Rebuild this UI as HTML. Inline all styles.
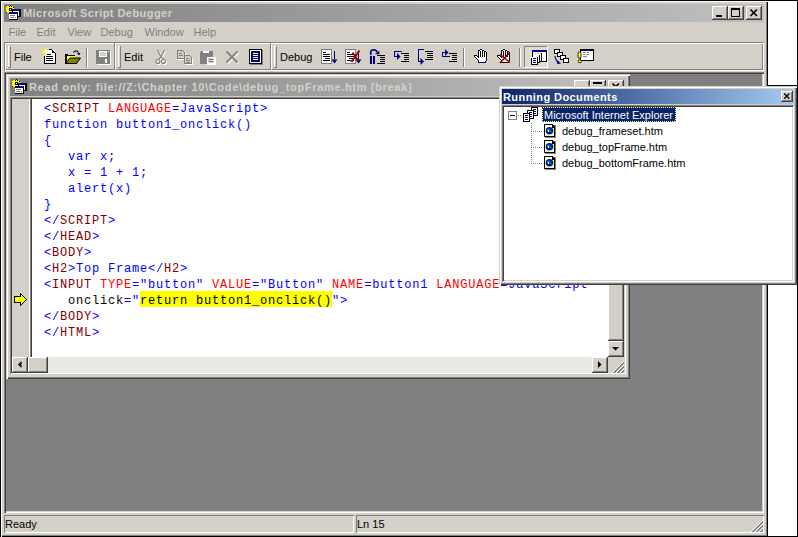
<!DOCTYPE html>
<html><head><meta charset="utf-8">
<style>
*{margin:0;padding:0;box-sizing:border-box}
html,body{width:798px;height:537px;overflow:hidden;background:#fff;font-family:"Liberation Sans",sans-serif;font-size:11px;line-height:13px}
div,svg{position:absolute}
svg{shape-rendering:crispEdges;overflow:visible}
.ln{background:#000}
.tt{font-weight:bold;color:#d4d0c8;white-space:nowrap;letter-spacing:0.35px}
.raised{background:#d4d0c8;box-shadow:inset -1px -1px #404040,inset 1px 1px #fff,inset -2px -2px #808080}
.sunk{box-shadow:inset 1px 1px #808080,inset -1px -1px #fff,inset 2px 2px #404040,inset -2px -2px #d4d0c8}
.thin{box-shadow:inset 1px 1px #808080,inset -1px -1px #fff}
.mn{top:26px;color:#808080;white-space:nowrap}
.lbl{top:51px;color:#000;white-space:nowrap}
.sep{top:48px;width:2px;height:19px;box-shadow:inset 1px 0 #808080,inset -1px 0 #fff}
.div{top:42px;width:2px;height:29px;box-shadow:inset 1px 0 #808080,inset -1px 0 #fff}
.grip{top:46px;width:3px;height:22px;box-shadow:inset 1px 1px #fff,inset -1px -1px #808080}
.code{left:44px;top:101px;font-family:"Liberation Mono",monospace;font-size:12px;letter-spacing:0.8px;white-space:pre;line-height:16px;color:#0000ff}
.m{color:#800000}.r{color:#ff0000}.k{color:#000}
.tree{color:#000;white-space:nowrap}
</style></head><body>

<!-- ===== main window frame ===== -->
<div style="left:0;top:0;width:768px;height:537px;background:#d4d0c8;box-shadow:inset 1px 1px #000,inset 2px 2px #fff,inset -1px -1px #000,inset -2px -2px #808080"></div>
<!-- right white strip borders -->
<div class="ln" style="left:767px;top:0;width:31px;height:1px"></div>
<div class="ln" style="left:797px;top:0;width:1px;height:537px"></div>
<div class="ln" style="left:767px;top:536px;width:31px;height:1px"></div>
<div class="ln" style="left:767px;top:85px;width:31px;height:1px"></div>

<!-- ===== title bar ===== -->
<div style="left:4px;top:4px;width:760px;height:18px;background:linear-gradient(to right,#808080,#c0c0c0)"></div>
<svg style="left:6px;top:5px" width="16" height="16" viewBox="0 0 16 16">
 <g fill="#ffff00"><rect x="1" y="1" width="6" height="7"/><rect x="0" y="2" width="8" height="5"/></g>
 <g fill="#000"><rect x="4" y="0" width="1" height="1"/><rect x="3" y="1" width="1" height="1"/><rect x="5" y="1" width="1" height="1"/><rect x="7" y="2" width="1" height="1"/><rect x="0" y="7" width="1" height="1"/><rect x="3" y="3" width="3" height="3"/></g>
 <rect x="4" y="4" width="1" height="1" fill="#fff"/>
 <rect x="6" y="4" width="9" height="8" fill="#000"/><rect x="6" y="4" width="8" height="2" fill="#000080"/><rect x="7" y="6" width="6" height="5" fill="#fff"/>
 <rect x="3" y="7" width="9" height="8" fill="#000"/><rect x="3" y="7" width="8" height="2" fill="#000080"/><rect x="3" y="9" width="8" height="5" fill="#fff"/>
 <g fill="#808080"><rect x="4" y="10" width="5" height="1"/><rect x="4" y="12" width="4" height="1"/><rect x="9" y="12" width="1" height="1"/></g>
</svg>
<div class="tt" style="left:23px;top:7px;letter-spacing:0.45px">Microsoft Script Debugger</div>
<div class="raised" style="left:712px;top:6px;width:16px;height:14px"></div>
<div class="ln" style="left:716px;top:15px;width:6px;height:2px"></div>
<div class="raised" style="left:728px;top:6px;width:16px;height:14px"></div>
<div style="left:731px;top:8px;width:9px;height:9px;border:1px solid #000;border-top-width:2px"></div>
<div class="raised" style="left:746px;top:6px;width:16px;height:14px"></div>
<svg style="left:746px;top:6px" width="16" height="14" viewBox="0 0 16 14"><path d="M4.5 3.5 L11 10 M11 3.5 L4.5 10" stroke="#000" stroke-width="1.6" shape-rendering="geometricPrecision"/></svg>

<!-- ===== menu ===== -->
<div class="mn" style="left:8.5px">File</div>
<div class="mn" style="left:36.5px">Edit</div>
<div class="mn" style="left:67.5px">View</div>
<div class="mn" style="left:100.5px">Debug</div>
<div class="mn" style="left:144.5px">Window</div>
<div class="mn" style="left:193.5px">Help</div>

<!-- ===== toolbar band ===== -->
<div id="band" style="left:4px;top:42px;width:760px;height:29px;box-shadow:inset 1px 1px #808080,inset 2px 2px #fff,inset -1px -1px #fff,inset -2px -2px #808080"></div>
<div id="tools"></div>
<svg style="left:0;top:0" width="798" height="80" viewBox="0 0 798 80">
<!-- grippers & dividers -->
<g fill="#fff"><rect x="8" y="46" width="1" height="22"/><rect x="8" y="46" width="3" height="1"/>
<rect x="118" y="46" width="1" height="22"/><rect x="118" y="46" width="3" height="1"/>
<rect x="274" y="46" width="1" height="22"/><rect x="274" y="46" width="3" height="1"/>
<rect x="115" y="43" width="1" height="28"/><rect x="271" y="43" width="1" height="28"/>
<rect x="87" y="48" width="1" height="19"/><rect x="464" y="48" width="1" height="19"/><rect x="520" y="48" width="1" height="19"/></g>
<g fill="#808080"><rect x="10" y="46" width="1" height="22"/><rect x="8" y="67" width="3" height="1"/>
<rect x="120" y="46" width="1" height="22"/><rect x="118" y="67" width="3" height="1"/>
<rect x="276" y="46" width="1" height="22"/><rect x="274" y="67" width="3" height="1"/>
<rect x="114" y="42" width="1" height="28"/><rect x="270" y="42" width="1" height="28"/>
<rect x="86" y="48" width="1" height="19"/><rect x="463" y="48" width="1" height="19"/><rect x="519" y="48" width="1" height="19"/></g>

<!-- NEW -->
<rect x="45" y="50" width="10" height="13" fill="#fff"/>
<g fill="#000"><rect x="44" y="54" width="1" height="10"/><rect x="44" y="63" width="12" height="1"/><rect x="55" y="53" width="1" height="11"/>
<rect x="49" y="49" width="3" height="1"/><rect x="52" y="50" width="1" height="1"/><rect x="53" y="51" width="1" height="1"/><rect x="54" y="52" width="1" height="1"/>
<rect x="52" y="51" width="1" height="2"/><rect x="53" y="52" width="1" height="1"/>
<rect x="46" y="56" width="7" height="1"/><rect x="46" y="58" width="7" height="1"/><rect x="46" y="60" width="7" height="1"/><rect x="47" y="54" width="4" height="1"/></g>
<g fill="#ffff00"><rect x="41" y="49" width="1" height="1"/><rect x="42" y="50" width="1" height="1"/><rect x="43" y="51" width="2" height="2"/><rect x="41" y="52" width="2" height="1"/><rect x="46" y="51" width="1" height="1"/><rect x="47" y="50" width="1" height="1"/><rect x="45" y="53" width="1" height="1"/><rect x="44" y="54" width="1" height="2"/><rect x="45" y="48" width="1" height="2"/></g>

<!-- OPEN -->
<path d="M65 54 H68 V55 H75 V58 H67 V63 H65 Z" fill="#000"/>
<rect x="67" y="56" width="8" height="7" fill="#ffff00"/>
<g fill="#fff"><rect x="68" y="57" width="1" height="1"/><rect x="70" y="57" width="1" height="1"/><rect x="72" y="57" width="1" height="1"/><rect x="69" y="59" width="1" height="1"/><rect x="68" y="61" width="1" height="1"/></g>
<path d="M70 58 H80.5 L76.5 63.5 H65.5 Z" fill="#808000" stroke="#000" stroke-width="1" shape-rendering="geometricPrecision"/>
<rect x="65" y="63" width="12" height="1" fill="#000"/>
<path d="M73.5 52.5 Q76 49 78.5 52.5" fill="none" stroke="#000" stroke-width="1.2" shape-rendering="geometricPrecision"/>
<path d="M77 53 H80.5 L79 55.5 Z" fill="#000" shape-rendering="geometricPrecision"/>

<!-- SAVE disabled -->
<rect x="97" y="51" width="14" height="14" fill="#fff"/>
<rect x="96" y="50" width="14" height="14" fill="#808080"/>
<rect x="99" y="51" width="8" height="6" fill="#fff"/><rect x="100" y="52" width="6" height="4" fill="#d4d0c8"/>
<rect x="105" y="59" width="2" height="4" fill="#fff"/><rect x="108" y="51" width="1" height="1" fill="#fff"/>

<!-- CUT disabled -->
<g shape-rendering="geometricPrecision" fill="none" stroke-width="1.1">
<g stroke="#fff" transform="translate(1,1)"><path d="M157.5 50 L161 57 M164.5 50 L161 57 M161 57 L158.5 59 M161 57 L163.5 59"/><circle cx="158" cy="61.5" r="2"/><circle cx="163.5" cy="61.5" r="2"/></g>
<g stroke="#808080"><path d="M157.5 50 L161 57 M164.5 50 L161 57 M161 57 L158.5 59 M161 57 L163.5 59"/><circle cx="158" cy="61.5" r="2"/><circle cx="163.5" cy="61.5" r="2"/></g>
</g>

<!-- COPY disabled -->
<g fill="none" stroke="#fff" stroke-width="1" transform="translate(1,1)">
<path d="M177.5 50.5 H182.5 L184.5 52.5 V58.5 H177.5 Z"/><path d="M184.5 55.5 H189.5 L191.5 57.5 V63.5 H184.5 Z"/>
</g>
<g fill="#d4d0c8" stroke="#808080" stroke-width="1">
<path d="M177.5 50.5 H182.5 L184.5 52.5 V58.5 H177.5 Z"/><path d="M184.5 55.5 H189.5 L191.5 57.5 V63.5 H184.5 Z"/>
</g>
<g fill="#808080"><rect x="179" y="53" width="3" height="1"/><rect x="179" y="55" width="4" height="1"/><rect x="186" y="58" width="3" height="1"/><rect x="186" y="60" width="4" height="1"/><rect x="186" y="62" width="4" height="1"/></g>
<!-- PASTE disabled -->
<rect x="200" y="51" width="13" height="13" rx="2" fill="#808080"/>
<rect x="203" y="51" width="6" height="2" fill="#fff"/>
<rect x="207" y="57" width="9" height="8" fill="#fff"/><rect x="208" y="58" width="6" height="5" fill="#d4d0c8"/>
<rect x="209" y="59" width="4" height="1" fill="#808080"/><rect x="209" y="61" width="4" height="1" fill="#808080"/>

<!-- DELETE disabled -->
<g shape-rendering="geometricPrecision" stroke-width="1.8">
<path d="M226.5 51.5 L237.5 62.5 M237.5 51.5 L226.5 62.5" stroke="#fff" transform="translate(1,1)"/>
<path d="M226.5 51.5 L237.5 62.5 M237.5 51.5 L226.5 62.5" stroke="#808080"/>
</g>

<!-- PROPERTIES -->
<rect x="250" y="50" width="13" height="15" fill="#808080"/>
<rect x="249" y="49" width="13" height="15" fill="#000"/>
<rect x="250" y="50" width="11" height="13" fill="#fff"/>
<rect x="251" y="51" width="9" height="11" fill="#000080"/>
<g fill="#fff"><rect x="253" y="53" width="5" height="1"/><rect x="253" y="55" width="5" height="1"/><rect x="253" y="57" width="5" height="1"/><rect x="253" y="59" width="5" height="1"/></g>

<!-- RUN -->
<rect x="321" y="49" width="11" height="15" fill="#808080"/><rect x="322" y="50" width="9" height="13" fill="#fff"/>
<g fill="#000"><rect x="323" y="52" width="3" height="1"/><rect x="323" y="54" width="7" height="1"/><rect x="323" y="56" width="7" height="1"/><rect x="325" y="58" width="5" height="1"/><rect x="323" y="60" width="7" height="1"/></g>
<rect x="334" y="51" width="1" height="10" fill="#000080"/>
<path d="M331.5 59.5 H337.5 L334.5 63.5 Z" fill="#000080" shape-rendering="geometricPrecision"/>

<!-- STOP -->
<rect x="345" y="49" width="11" height="15" fill="#808080"/><rect x="346" y="50" width="9" height="13" fill="#fff"/>
<g fill="#000"><rect x="347" y="52" width="3" height="1"/><rect x="347" y="54" width="7" height="1"/><rect x="347" y="56" width="7" height="1"/><rect x="349" y="58" width="5" height="1"/><rect x="347" y="60" width="7" height="1"/></g>
<rect x="358" y="53" width="1" height="8" fill="#000080"/>
<path d="M355.5 59.5 H361.5 L358.5 63.5 Z" fill="#000080" shape-rendering="geometricPrecision"/>
<path d="M351.5 62 L359.5 50.5 M352.5 52.5 L358.5 61" stroke="#9b0000" stroke-width="1.8" shape-rendering="geometricPrecision"/>

<!-- BREAK -->
<g fill="#000080"><rect x="370" y="56" width="2" height="8"/><rect x="373" y="56" width="2" height="8"/></g>
<path d="M371 55 Q369.5 50 373.5 49.8 Q376.5 50 377 52" fill="none" stroke="#000080" stroke-width="1.6" shape-rendering="geometricPrecision"/>
<path d="M375 53.8 L379.3 50.8 L379.3 54.5 Z" fill="#000080" shape-rendering="geometricPrecision"/>
<g fill="#000"><rect x="377" y="55" width="8" height="1"/><rect x="380" y="57" width="5" height="1"/><rect x="380" y="59" width="5" height="1"/><rect x="380" y="61" width="5" height="1"/><rect x="377" y="63" width="8" height="1"/></g>

<!-- STEP INTO -->
<g fill="#000080"><rect x="394" y="51" width="8" height="1"/><rect x="394" y="51" width="1" height="6"/><rect x="394" y="56" width="4" height="1"/></g>
<path d="M397 53 L400.5 56.5 L397 60 Z" fill="#000080" shape-rendering="geometricPrecision"/>
<g fill="#000"><rect x="401" y="53" width="8" height="1"/><rect x="404" y="55" width="5" height="1"/><rect x="404" y="57" width="5" height="1"/><rect x="404" y="59" width="5" height="1"/><rect x="401" y="61" width="8" height="1"/></g>

<!-- STEP OVER -->
<g fill="#000080"><rect x="418" y="49" width="6" height="1"/><rect x="418" y="49" width="1" height="13"/><rect x="418" y="61" width="3" height="1"/></g>
<path d="M420.5 58 L424 61.5 L420.5 65 Z" fill="#000080" shape-rendering="geometricPrecision"/>
<g fill="#000"><rect x="425" y="51" width="8" height="1"/><rect x="427" y="53" width="6" height="1"/><rect x="427" y="55" width="6" height="1"/><rect x="427" y="57" width="6" height="1"/><rect x="425" y="59" width="8" height="1"/></g>

<!-- STEP OUT -->
<g fill="#000080"><rect x="442" y="52" width="1" height="5"/><rect x="442" y="56" width="8" height="1"/><rect x="442" y="52" width="4" height="1"/></g>
<path d="M445 49 L448.5 52.5 L445 56 Z" fill="#000080" shape-rendering="geometricPrecision"/>
<g fill="#000"><rect x="449" y="53" width="8" height="1"/><rect x="452" y="55" width="5" height="1"/><rect x="452" y="57" width="5" height="1"/><rect x="452" y="59" width="5" height="1"/><rect x="449" y="61" width="8" height="1"/></g>

<!-- HAND -->
<rect x="480" y="49" width="2" height="1" fill="#000"/><rect x="478" y="50" width="2" height="1" fill="#000"/><rect x="480" y="50" width="2" height="1" fill="#fff"/><rect x="482" y="50" width="2" height="1" fill="#000"/><rect x="478" y="51" width="1" height="1" fill="#000"/><rect x="479" y="51" width="1" height="1" fill="#fff"/><rect x="480" y="51" width="1" height="1" fill="#000"/><rect x="481" y="51" width="1" height="1" fill="#fff"/><rect x="482" y="51" width="1" height="1" fill="#000"/><rect x="483" y="51" width="1" height="1" fill="#fff"/><rect x="484" y="51" width="2" height="1" fill="#000"/><rect x="478" y="52" width="1" height="1" fill="#000"/><rect x="479" y="52" width="1" height="1" fill="#fff"/><rect x="480" y="52" width="1" height="1" fill="#000"/><rect x="481" y="52" width="1" height="1" fill="#fff"/><rect x="482" y="52" width="1" height="1" fill="#000"/><rect x="483" y="52" width="1" height="1" fill="#fff"/><rect x="484" y="52" width="1" height="1" fill="#000"/><rect x="485" y="52" width="1" height="1" fill="#fff"/><rect x="486" y="52" width="1" height="1" fill="#000"/><rect x="478" y="53" width="1" height="1" fill="#000"/><rect x="479" y="53" width="1" height="1" fill="#fff"/><rect x="480" y="53" width="1" height="1" fill="#000"/><rect x="481" y="53" width="1" height="1" fill="#fff"/><rect x="482" y="53" width="1" height="1" fill="#000"/><rect x="483" y="53" width="1" height="1" fill="#fff"/><rect x="484" y="53" width="1" height="1" fill="#000"/><rect x="485" y="53" width="1" height="1" fill="#fff"/><rect x="486" y="53" width="1" height="1" fill="#000"/><rect x="478" y="54" width="1" height="1" fill="#000"/><rect x="479" y="54" width="1" height="1" fill="#fff"/><rect x="480" y="54" width="1" height="1" fill="#000"/><rect x="481" y="54" width="1" height="1" fill="#fff"/><rect x="482" y="54" width="1" height="1" fill="#000"/><rect x="483" y="54" width="1" height="1" fill="#fff"/><rect x="484" y="54" width="1" height="1" fill="#000"/><rect x="485" y="54" width="1" height="1" fill="#fff"/><rect x="486" y="54" width="1" height="1" fill="#000"/><rect x="474" y="55" width="3" height="1" fill="#000"/><rect x="478" y="55" width="1" height="1" fill="#000"/><rect x="479" y="55" width="1" height="1" fill="#fff"/><rect x="480" y="55" width="1" height="1" fill="#000"/><rect x="481" y="55" width="1" height="1" fill="#fff"/><rect x="482" y="55" width="1" height="1" fill="#000"/><rect x="483" y="55" width="1" height="1" fill="#fff"/><rect x="484" y="55" width="1" height="1" fill="#000"/><rect x="485" y="55" width="1" height="1" fill="#fff"/><rect x="486" y="55" width="1" height="1" fill="#000"/><rect x="474" y="56" width="1" height="1" fill="#000"/><rect x="475" y="56" width="2" height="1" fill="#fff"/><rect x="477" y="56" width="2" height="1" fill="#000"/><rect x="479" y="56" width="1" height="1" fill="#fff"/><rect x="480" y="56" width="1" height="1" fill="#000"/><rect x="481" y="56" width="1" height="1" fill="#fff"/><rect x="482" y="56" width="1" height="1" fill="#000"/><rect x="483" y="56" width="1" height="1" fill="#fff"/><rect x="484" y="56" width="1" height="1" fill="#000"/><rect x="485" y="56" width="1" height="1" fill="#fff"/><rect x="486" y="56" width="1" height="1" fill="#000"/><rect x="475" y="57" width="1" height="1" fill="#000"/><rect x="476" y="57" width="2" height="1" fill="#fff"/><rect x="478" y="57" width="1" height="1" fill="#000"/><rect x="479" y="57" width="7" height="1" fill="#fff"/><rect x="486" y="57" width="1" height="1" fill="#000"/><rect x="476" y="58" width="1" height="1" fill="#000"/><rect x="477" y="58" width="9" height="1" fill="#fff"/><rect x="486" y="58" width="1" height="1" fill="#000"/><rect x="477" y="59" width="1" height="1" fill="#000"/><rect x="478" y="59" width="8" height="1" fill="#fff"/><rect x="486" y="59" width="1" height="1" fill="#000"/><rect x="478" y="60" width="1" height="1" fill="#000"/><rect x="479" y="60" width="7" height="1" fill="#fff"/><rect x="486" y="60" width="1" height="1" fill="#000"/><rect x="478" y="61" width="1" height="1" fill="#000"/><rect x="479" y="61" width="6" height="1" fill="#fff"/><rect x="485" y="61" width="1" height="1" fill="#000"/><rect x="478" y="62" width="8" height="1" fill="#0000a0"/>
<!-- HAND X -->
<rect x="503" y="49" width="2" height="1" fill="#000"/><rect x="501" y="50" width="2" height="1" fill="#000"/><rect x="503" y="50" width="2" height="1" fill="#fff"/><rect x="505" y="50" width="2" height="1" fill="#000"/><rect x="501" y="51" width="1" height="1" fill="#000"/><rect x="502" y="51" width="1" height="1" fill="#fff"/><rect x="503" y="51" width="1" height="1" fill="#000"/><rect x="504" y="51" width="1" height="1" fill="#fff"/><rect x="505" y="51" width="1" height="1" fill="#000"/><rect x="506" y="51" width="1" height="1" fill="#fff"/><rect x="507" y="51" width="2" height="1" fill="#000"/><rect x="501" y="52" width="1" height="1" fill="#000"/><rect x="502" y="52" width="1" height="1" fill="#fff"/><rect x="503" y="52" width="1" height="1" fill="#000"/><rect x="504" y="52" width="1" height="1" fill="#fff"/><rect x="505" y="52" width="1" height="1" fill="#000"/><rect x="506" y="52" width="1" height="1" fill="#fff"/><rect x="507" y="52" width="1" height="1" fill="#000"/><rect x="508" y="52" width="1" height="1" fill="#fff"/><rect x="509" y="52" width="1" height="1" fill="#000"/><rect x="501" y="53" width="1" height="1" fill="#000"/><rect x="502" y="53" width="1" height="1" fill="#fff"/><rect x="503" y="53" width="1" height="1" fill="#000"/><rect x="504" y="53" width="1" height="1" fill="#fff"/><rect x="505" y="53" width="1" height="1" fill="#000"/><rect x="506" y="53" width="1" height="1" fill="#fff"/><rect x="507" y="53" width="1" height="1" fill="#000"/><rect x="508" y="53" width="1" height="1" fill="#fff"/><rect x="509" y="53" width="1" height="1" fill="#000"/><rect x="501" y="54" width="1" height="1" fill="#000"/><rect x="502" y="54" width="1" height="1" fill="#fff"/><rect x="503" y="54" width="1" height="1" fill="#000"/><rect x="504" y="54" width="1" height="1" fill="#fff"/><rect x="505" y="54" width="1" height="1" fill="#000"/><rect x="506" y="54" width="1" height="1" fill="#fff"/><rect x="507" y="54" width="1" height="1" fill="#000"/><rect x="508" y="54" width="1" height="1" fill="#fff"/><rect x="509" y="54" width="1" height="1" fill="#000"/><rect x="497" y="55" width="3" height="1" fill="#000"/><rect x="501" y="55" width="1" height="1" fill="#000"/><rect x="502" y="55" width="1" height="1" fill="#fff"/><rect x="503" y="55" width="1" height="1" fill="#000"/><rect x="504" y="55" width="1" height="1" fill="#fff"/><rect x="505" y="55" width="1" height="1" fill="#000"/><rect x="506" y="55" width="1" height="1" fill="#fff"/><rect x="507" y="55" width="1" height="1" fill="#000"/><rect x="508" y="55" width="1" height="1" fill="#fff"/><rect x="509" y="55" width="1" height="1" fill="#000"/><rect x="497" y="56" width="1" height="1" fill="#000"/><rect x="498" y="56" width="2" height="1" fill="#fff"/><rect x="500" y="56" width="2" height="1" fill="#000"/><rect x="502" y="56" width="1" height="1" fill="#fff"/><rect x="503" y="56" width="1" height="1" fill="#000"/><rect x="504" y="56" width="1" height="1" fill="#fff"/><rect x="505" y="56" width="1" height="1" fill="#000"/><rect x="506" y="56" width="1" height="1" fill="#fff"/><rect x="507" y="56" width="1" height="1" fill="#000"/><rect x="508" y="56" width="1" height="1" fill="#fff"/><rect x="509" y="56" width="1" height="1" fill="#000"/><rect x="498" y="57" width="1" height="1" fill="#000"/><rect x="499" y="57" width="2" height="1" fill="#fff"/><rect x="501" y="57" width="1" height="1" fill="#000"/><rect x="502" y="57" width="7" height="1" fill="#fff"/><rect x="509" y="57" width="1" height="1" fill="#000"/><rect x="499" y="58" width="1" height="1" fill="#000"/><rect x="500" y="58" width="9" height="1" fill="#fff"/><rect x="509" y="58" width="1" height="1" fill="#000"/><rect x="500" y="59" width="1" height="1" fill="#000"/><rect x="501" y="59" width="8" height="1" fill="#fff"/><rect x="509" y="59" width="1" height="1" fill="#000"/><rect x="501" y="60" width="1" height="1" fill="#000"/><rect x="502" y="60" width="7" height="1" fill="#fff"/><rect x="509" y="60" width="1" height="1" fill="#000"/><rect x="501" y="61" width="1" height="1" fill="#000"/><rect x="502" y="61" width="6" height="1" fill="#fff"/><rect x="508" y="61" width="1" height="1" fill="#000"/><rect x="501" y="62" width="8" height="1" fill="#000"/>
<path d="M500 63 L509.5 52.5 M500 54.5 L510 62.5" stroke="#9b0000" stroke-width="1.6" shape-rendering="geometricPrecision"/>
<!-- pressed button -->
<rect x="524" y="46" width="24" height="22" fill="#dfdcd6"/>
<rect x="524" y="46" width="24" height="1" fill="#808080"/><rect x="524" y="46" width="1" height="22" fill="#808080"/>
<rect x="524" y="67" width="24" height="1" fill="#fff"/><rect x="547" y="46" width="1" height="22" fill="#fff"/>
<!-- RUNNING DOCS icon -->
<rect x="532" y="50" width="15" height="2" fill="#000080"/>
<rect x="532" y="52" width="15" height="10" fill="#000"/>
<rect x="533" y="52" width="13" height="9" fill="#fff"/>
<rect x="541" y="53" width="1" height="8" fill="#000"/><rect x="533" y="53" width="8" height="1" fill="#d4d0c8"/>
<rect x="538" y="55" width="1" height="6" fill="#000"/><rect x="534" y="55" width="4" height="1" fill="#d4d0c8"/>
<rect x="534" y="55" width="6" height="8" fill="#000"/><rect x="534" y="55" width="5" height="7" fill="#fff"/>
<rect x="531" y="57" width="7" height="8" fill="#000"/><rect x="532" y="57" width="5" height="7" fill="#fff"/><rect x="531" y="57" width="6" height="1" fill="#fff"/>
<g fill="#000080"><rect x="533" y="58" width="3" height="1"/><rect x="533" y="60" width="3" height="1"/><rect x="533" y="62" width="3" height="1"/></g>
<!-- CALL STACK -->
<g fill="#fff" stroke="#000" stroke-width="1">
<rect x="554.5" y="49.5" width="5" height="4"/><rect x="557.5" y="52.5" width="5" height="4"/><rect x="560.5" y="55.5" width="5" height="4"/><rect x="563.5" y="58.5" width="5" height="4"/>
</g>
<path d="M555 56 Q555.5 61 559 62.5" fill="none" stroke="#000080" stroke-width="1.2" shape-rendering="geometricPrecision"/>
<path d="M557.5 60.5 L561 63.5 L557 64 Z" fill="#000080" shape-rendering="geometricPrecision"/>

<!-- COMMAND -->
<rect x="580" y="49" width="14" height="12" fill="#000"/><rect x="581" y="50" width="12" height="1" fill="#000080"/>
<rect x="581" y="51" width="12" height="9" fill="#fff"/>
<g fill="#808080"><rect x="583" y="52" width="3" height="1"/><rect x="587" y="52" width="2" height="1"/><rect x="583" y="54" width="2" height="1"/><rect x="586" y="54" width="3" height="1"/><rect x="583" y="56" width="4" height="1"/></g>
<rect x="578" y="52" width="3" height="6" rx="1" fill="#ffff00" stroke="#000" stroke-width="0.8" shape-rendering="geometricPrecision"/>
<circle cx="579.8" cy="61.2" r="1.6" fill="#ffff00" stroke="#000" stroke-width="0.8" shape-rendering="geometricPrecision"/>
</svg>
<div class="lbl" style="left:14px">File</div>
<div class="lbl" style="left:124px">Edit</div>
<div class="lbl" style="left:280px">Debug</div>


<!-- ===== MDI client ===== -->
<div style="left:4px;top:72px;width:760px;height:441px;background:#808080;box-shadow:inset 1px 1px #808080,inset 2px 2px #404040,inset -1px -1px #fff,inset -2px -2px #d4d0c8"></div>

<!-- ===== status bar ===== -->
<div class="thin" style="left:4px;top:515px;width:350px;height:18px"></div>
<div style="left:5px;top:518px;color:#000">Ready</div>
<div class="thin" style="left:356px;top:515px;width:408px;height:18px"></div>
<div style="left:357px;top:518px;color:#000">Ln 15</div>
<svg style="left:751px;top:520px" width="12" height="12" viewBox="0 0 12 12"><rect x="0" y="11" width="1" height="1" fill="#fff"/><rect x="1" y="10" width="1" height="1" fill="#fff"/><rect x="1" y="11" width="1" height="1" fill="#808080"/><rect x="2" y="9" width="1" height="1" fill="#fff"/><rect x="2" y="10" width="1" height="1" fill="#808080"/><rect x="2" y="11" width="1" height="1" fill="#808080"/><rect x="3" y="8" width="1" height="1" fill="#fff"/><rect x="3" y="9" width="1" height="1" fill="#808080"/><rect x="3" y="10" width="1" height="1" fill="#808080"/><rect x="4" y="7" width="1" height="1" fill="#fff"/><rect x="4" y="8" width="1" height="1" fill="#808080"/><rect x="4" y="9" width="1" height="1" fill="#808080"/><rect x="4" y="11" width="1" height="1" fill="#fff"/><rect x="5" y="6" width="1" height="1" fill="#fff"/><rect x="5" y="7" width="1" height="1" fill="#808080"/><rect x="5" y="8" width="1" height="1" fill="#808080"/><rect x="5" y="10" width="1" height="1" fill="#fff"/><rect x="5" y="11" width="1" height="1" fill="#808080"/><rect x="6" y="5" width="1" height="1" fill="#fff"/><rect x="6" y="6" width="1" height="1" fill="#808080"/><rect x="6" y="7" width="1" height="1" fill="#808080"/><rect x="6" y="9" width="1" height="1" fill="#fff"/><rect x="6" y="10" width="1" height="1" fill="#808080"/><rect x="6" y="11" width="1" height="1" fill="#808080"/><rect x="7" y="4" width="1" height="1" fill="#fff"/><rect x="7" y="5" width="1" height="1" fill="#808080"/><rect x="7" y="6" width="1" height="1" fill="#808080"/><rect x="7" y="8" width="1" height="1" fill="#fff"/><rect x="7" y="9" width="1" height="1" fill="#808080"/><rect x="7" y="10" width="1" height="1" fill="#808080"/><rect x="8" y="3" width="1" height="1" fill="#fff"/><rect x="8" y="4" width="1" height="1" fill="#808080"/><rect x="8" y="5" width="1" height="1" fill="#808080"/><rect x="8" y="7" width="1" height="1" fill="#fff"/><rect x="8" y="8" width="1" height="1" fill="#808080"/><rect x="8" y="9" width="1" height="1" fill="#808080"/><rect x="8" y="11" width="1" height="1" fill="#fff"/><rect x="9" y="2" width="1" height="1" fill="#fff"/><rect x="9" y="3" width="1" height="1" fill="#808080"/><rect x="9" y="4" width="1" height="1" fill="#808080"/><rect x="9" y="6" width="1" height="1" fill="#fff"/><rect x="9" y="7" width="1" height="1" fill="#808080"/><rect x="9" y="8" width="1" height="1" fill="#808080"/><rect x="9" y="10" width="1" height="1" fill="#fff"/><rect x="9" y="11" width="1" height="1" fill="#808080"/><rect x="10" y="1" width="1" height="1" fill="#fff"/><rect x="10" y="2" width="1" height="1" fill="#808080"/><rect x="10" y="3" width="1" height="1" fill="#808080"/><rect x="10" y="5" width="1" height="1" fill="#fff"/><rect x="10" y="6" width="1" height="1" fill="#808080"/><rect x="10" y="7" width="1" height="1" fill="#808080"/><rect x="10" y="9" width="1" height="1" fill="#fff"/><rect x="10" y="10" width="1" height="1" fill="#808080"/><rect x="10" y="11" width="1" height="1" fill="#808080"/><rect x="11" y="0" width="1" height="1" fill="#fff"/><rect x="11" y="1" width="1" height="1" fill="#808080"/><rect x="11" y="2" width="1" height="1" fill="#808080"/><rect x="11" y="4" width="1" height="1" fill="#fff"/><rect x="11" y="5" width="1" height="1" fill="#808080"/><rect x="11" y="6" width="1" height="1" fill="#808080"/><rect x="11" y="8" width="1" height="1" fill="#fff"/><rect x="11" y="9" width="1" height="1" fill="#808080"/><rect x="11" y="10" width="1" height="1" fill="#808080"/></svg>

<!-- ===== child window ===== -->
<div id="child" style="left:6px;top:74px;width:624px;height:305px;background:#d4d0c8;box-shadow:inset 1px 1px #d4d0c8,inset 2px 2px #fff,inset -1px -1px #404040,inset -2px -2px #808080"></div>
<div style="left:10px;top:78px;width:616px;height:18px;background:linear-gradient(to right,#808080,#c0c0c0)"></div>
<svg style="left:12px;top:79px" width="16" height="16" viewBox="0 0 16 16">
 <g fill="#ffff00"><rect x="1" y="1" width="6" height="7"/><rect x="0" y="2" width="8" height="5"/></g>
 <g fill="#000"><rect x="4" y="0" width="1" height="1"/><rect x="3" y="1" width="1" height="1"/><rect x="5" y="1" width="1" height="1"/><rect x="7" y="2" width="1" height="1"/><rect x="0" y="7" width="1" height="1"/><rect x="3" y="3" width="3" height="3"/></g>
 <rect x="4" y="4" width="1" height="1" fill="#fff"/>
 <rect x="6" y="4" width="9" height="8" fill="#000"/><rect x="6" y="4" width="8" height="2" fill="#000080"/><rect x="7" y="6" width="6" height="5" fill="#fff"/>
 <rect x="3" y="7" width="9" height="8" fill="#000"/><rect x="3" y="7" width="8" height="2" fill="#000080"/><rect x="3" y="9" width="8" height="5" fill="#fff"/>
 <g fill="#808080"><rect x="4" y="10" width="5" height="1"/><rect x="4" y="12" width="4" height="1"/><rect x="9" y="12" width="1" height="1"/></g>
</svg>
<div class="tt" style="left:29px;top:81px;letter-spacing:0.67px">Read only: file://Z:\Chapter 10\Code\debug_topFrame.htm [break]</div>
<div class="raised" style="left:574px;top:80px;width:16px;height:14px"></div>
<div class="raised" style="left:590px;top:80px;width:16px;height:14px"></div>
<div class="ln" style="left:593px;top:82px;width:9px;height:2px"></div>
<div class="raised" style="left:608px;top:80px;width:16px;height:14px"></div>
<svg style="left:608px;top:80px" width="16" height="14" viewBox="0 0 16 14"><path d="M4.5 3.5 L11 10 M11 3.5 L4.5 10" stroke="#000" stroke-width="1.6" shape-rendering="geometricPrecision"/></svg>

<!-- editor -->
<div class="sunk" style="left:10px;top:97px;width:616px;height:277px;background:#fff"></div>
<div style="left:12px;top:99px;width:20px;height:258px;background:#d4d0c8;box-shadow:inset -1px 0 #404040,inset -2px 0 #808080,inset -3px 0 #fff"></div>
<svg style="left:14px;top:293px" width="14" height="14" viewBox="0 0 14 14" shape-rendering="geometricPrecision">
 <path d="M0.5 3.5 H6.5 V0.5 L12.5 6.5 L6.5 12.5 V9.5 H0.5 Z" fill="#ffff00" stroke="#000" stroke-width="1.2"/>
</svg>
<div style="left:140px;top:291px;width:192px;height:16px;background:#ffff00"></div>
<div class="code"><span>&lt;</span><span class="m">SCRIPT</span> <span class="r">LANGUAGE</span>=JavaScript&gt;
function button1_onclick()
{
   var x;
   x = 1 + 1;
   alert(x)
}
&lt;/<span class="m">SCRIPT</span>&gt;
&lt;/<span class="m">HEAD</span>&gt;
&lt;<span class="m">BODY</span>&gt;
&lt;<span class="m">H2</span>&gt;Top Frame&lt;/<span class="m">H2</span>&gt;
&lt;<span class="m">INPUT</span> <span class="r">TYPE</span>="button" <span class="r">VALUE</span>="Button" <span class="r">NAME</span>=button1 <span class="r">LANGUAGE</span>=JavaScript
<span class="k">   onclick</span>="<span class="k">return button1_onclick()</span>"&gt;
&lt;/<span class="m">BODY</span>&gt;
&lt;/<span class="m">HTML</span>&gt;</div>

<!-- scrollbars -->
<div class="raised" style="left:608px;top:99px;width:16px;height:242px"></div>
<div class="raised" style="left:608px;top:341px;width:16px;height:16px"></div>
<svg style="left:608px;top:341px" width="16" height="16"><path d="M4 6 H11 L7.5 9.5 Z" fill="#000" shape-rendering="geometricPrecision"/></svg>
<div style="left:12px;top:357px;width:596px;height:16px;background:#ebe9e5"></div>
<div class="raised" style="left:12px;top:357px;width:16px;height:16px"></div>
<svg style="left:12px;top:357px" width="16" height="16"><path d="M9.5 4 V11 L6 7.5 Z" fill="#000" shape-rendering="geometricPrecision"/></svg>
<div class="raised" style="left:28px;top:357px;width:20px;height:16px"></div>
<div class="raised" style="left:592px;top:357px;width:16px;height:16px"></div>
<svg style="left:592px;top:357px" width="16" height="16"><path d="M6 4 V11 L9.5 7.5 Z" fill="#000" shape-rendering="geometricPrecision"/></svg>
<div style="left:608px;top:357px;width:16px;height:16px;background:#d4d0c8"></div>
<svg style="left:612px;top:361px" width="12" height="12" viewBox="0 0 12 12"><rect x="0" y="11" width="1" height="1" fill="#fff"/><rect x="1" y="10" width="1" height="1" fill="#fff"/><rect x="1" y="11" width="1" height="1" fill="#808080"/><rect x="2" y="9" width="1" height="1" fill="#fff"/><rect x="2" y="10" width="1" height="1" fill="#808080"/><rect x="2" y="11" width="1" height="1" fill="#808080"/><rect x="3" y="8" width="1" height="1" fill="#fff"/><rect x="3" y="9" width="1" height="1" fill="#808080"/><rect x="3" y="10" width="1" height="1" fill="#808080"/><rect x="4" y="7" width="1" height="1" fill="#fff"/><rect x="4" y="8" width="1" height="1" fill="#808080"/><rect x="4" y="9" width="1" height="1" fill="#808080"/><rect x="4" y="11" width="1" height="1" fill="#fff"/><rect x="5" y="6" width="1" height="1" fill="#fff"/><rect x="5" y="7" width="1" height="1" fill="#808080"/><rect x="5" y="8" width="1" height="1" fill="#808080"/><rect x="5" y="10" width="1" height="1" fill="#fff"/><rect x="5" y="11" width="1" height="1" fill="#808080"/><rect x="6" y="5" width="1" height="1" fill="#fff"/><rect x="6" y="6" width="1" height="1" fill="#808080"/><rect x="6" y="7" width="1" height="1" fill="#808080"/><rect x="6" y="9" width="1" height="1" fill="#fff"/><rect x="6" y="10" width="1" height="1" fill="#808080"/><rect x="6" y="11" width="1" height="1" fill="#808080"/><rect x="7" y="4" width="1" height="1" fill="#fff"/><rect x="7" y="5" width="1" height="1" fill="#808080"/><rect x="7" y="6" width="1" height="1" fill="#808080"/><rect x="7" y="8" width="1" height="1" fill="#fff"/><rect x="7" y="9" width="1" height="1" fill="#808080"/><rect x="7" y="10" width="1" height="1" fill="#808080"/><rect x="8" y="3" width="1" height="1" fill="#fff"/><rect x="8" y="4" width="1" height="1" fill="#808080"/><rect x="8" y="5" width="1" height="1" fill="#808080"/><rect x="8" y="7" width="1" height="1" fill="#fff"/><rect x="8" y="8" width="1" height="1" fill="#808080"/><rect x="8" y="9" width="1" height="1" fill="#808080"/><rect x="8" y="11" width="1" height="1" fill="#fff"/><rect x="9" y="2" width="1" height="1" fill="#fff"/><rect x="9" y="3" width="1" height="1" fill="#808080"/><rect x="9" y="4" width="1" height="1" fill="#808080"/><rect x="9" y="6" width="1" height="1" fill="#fff"/><rect x="9" y="7" width="1" height="1" fill="#808080"/><rect x="9" y="8" width="1" height="1" fill="#808080"/><rect x="9" y="10" width="1" height="1" fill="#fff"/><rect x="9" y="11" width="1" height="1" fill="#808080"/><rect x="10" y="1" width="1" height="1" fill="#fff"/><rect x="10" y="2" width="1" height="1" fill="#808080"/><rect x="10" y="3" width="1" height="1" fill="#808080"/><rect x="10" y="5" width="1" height="1" fill="#fff"/><rect x="10" y="6" width="1" height="1" fill="#808080"/><rect x="10" y="7" width="1" height="1" fill="#808080"/><rect x="10" y="9" width="1" height="1" fill="#fff"/><rect x="10" y="10" width="1" height="1" fill="#808080"/><rect x="10" y="11" width="1" height="1" fill="#808080"/><rect x="11" y="0" width="1" height="1" fill="#fff"/><rect x="11" y="1" width="1" height="1" fill="#808080"/><rect x="11" y="2" width="1" height="1" fill="#808080"/><rect x="11" y="4" width="1" height="1" fill="#fff"/><rect x="11" y="5" width="1" height="1" fill="#808080"/><rect x="11" y="6" width="1" height="1" fill="#808080"/><rect x="11" y="8" width="1" height="1" fill="#fff"/><rect x="11" y="9" width="1" height="1" fill="#808080"/><rect x="11" y="10" width="1" height="1" fill="#808080"/></svg>

<!-- ===== Running Documents ===== -->
<div style="left:499px;top:86px;width:298px;height:199px;background:#d4d0c8;box-shadow:inset 1px 1px #d4d0c8,inset 2px 2px #fff,inset -1px -1px #404040,inset -2px -2px #808080"></div>
<div style="left:502px;top:89px;width:292px;height:15px;background:linear-gradient(to right,#0a246a,#a6caf0)"></div>
<div class="tt" style="left:503px;top:91px;color:#fff;letter-spacing:0.42px">Running Documents</div>
<div class="raised" style="left:781px;top:91px;width:12px;height:11px"></div>
<svg style="left:781px;top:91px" width="12" height="11" viewBox="0 0 12 11"><path d="M3.2 2.5 L8.3 7.8 M8.3 2.5 L3.2 7.8" stroke="#000" stroke-width="1.3" shape-rendering="geometricPrecision"/></svg>
<div class="sunk" style="left:502px;top:105px;width:292px;height:177px;background:#fff"></div>
<div id="tree"></div>
<svg style="left:0;top:0" width="798" height="200" viewBox="0 0 798 200">
<!-- expand box -->
<rect x="508.5" y="111.5" width="8" height="8" fill="#fff" stroke="#808080" stroke-width="1"/>
<rect x="510" y="115" width="5" height="1" fill="#000"/>
<g fill="#808080"><rect x="518" y="115" width="1" height="1"/><rect x="520" y="115" width="1" height="1"/></g>
<!-- vertical dotted -->
<g fill="#808080">
<rect x="531" y="123" width="1" height="1"/><rect x="531" y="125" width="1" height="1"/><rect x="531" y="127" width="1" height="1"/><rect x="531" y="129" width="1" height="1"/><rect x="531" y="131" width="1" height="1"/><rect x="531" y="133" width="1" height="1"/><rect x="531" y="135" width="1" height="1"/><rect x="531" y="137" width="1" height="1"/><rect x="531" y="139" width="1" height="1"/><rect x="531" y="141" width="1" height="1"/><rect x="531" y="143" width="1" height="1"/><rect x="531" y="145" width="1" height="1"/><rect x="531" y="147" width="1" height="1"/><rect x="531" y="149" width="1" height="1"/><rect x="531" y="151" width="1" height="1"/><rect x="531" y="153" width="1" height="1"/><rect x="531" y="155" width="1" height="1"/><rect x="531" y="157" width="1" height="1"/><rect x="531" y="159" width="1" height="1"/><rect x="531" y="161" width="1" height="1"/><rect x="531" y="163" width="1" height="1"/>
<rect x="533" y="131" width="1" height="1"/><rect x="535" y="131" width="1" height="1"/><rect x="537" y="131" width="1" height="1"/><rect x="539" y="131" width="1" height="1"/><rect x="541" y="131" width="1" height="1"/>
<rect x="533" y="147" width="1" height="1"/><rect x="535" y="147" width="1" height="1"/><rect x="537" y="147" width="1" height="1"/><rect x="539" y="147" width="1" height="1"/><rect x="541" y="147" width="1" height="1"/>
<rect x="533" y="163" width="1" height="1"/><rect x="535" y="163" width="1" height="1"/><rect x="537" y="163" width="1" height="1"/><rect x="539" y="163" width="1" height="1"/><rect x="541" y="163" width="1" height="1"/>
</g>
<!-- root icon: 3 stacked pages -->
<rect x="531" y="107" width="7" height="9" fill="#000"/><rect x="532" y="108" width="5" height="7" fill="#fff"/><g fill="#000080"><rect x="533" y="109" width="3" height="1"/><rect x="533" y="111" width="3" height="1"/><rect x="533" y="113" width="3" height="1"/></g>
<rect x="527" y="110" width="7" height="9" fill="#000"/><rect x="528" y="111" width="5" height="7" fill="#fff"/><g fill="#000080"><rect x="529" y="112" width="3" height="1"/><rect x="529" y="114" width="3" height="1"/><rect x="529" y="116" width="3" height="1"/></g>
<rect x="523" y="113" width="7" height="9" fill="#000"/><rect x="524" y="114" width="5" height="7" fill="#fff"/><g fill="#000080"><rect x="525" y="115" width="3" height="1"/><rect x="525" y="117" width="3" height="1"/><rect x="525" y="119" width="3" height="1"/></g>
<!-- selection -->
<rect x="542" y="107" width="134" height="15" fill="#0a246a"/>
<rect x="542.5" y="107.5" width="133" height="14" fill="none" stroke="#ffff80" stroke-width="1" stroke-dasharray="1 1"/>
</svg>
<svg style="left:544px;top:124px" width="13" height="15" viewBox="0 0 13 15">
<rect x="1" y="1" width="11" height="13" fill="#808080"/>
<path d="M0 0 H8 L11 3 V13 H0 Z" fill="#000"/><path d="M1 1 H7.5 L10 3.5 V12 H1 Z" fill="#fff"/>
<g fill="#ffff00"><rect x="2" y="1" width="1" height="1"/><rect x="4" y="1" width="1" height="1"/><rect x="6" y="1" width="1" height="1"/><rect x="1" y="3" width="1" height="1"/><rect x="1" y="5" width="1" height="1"/><rect x="1" y="7" width="1" height="1"/><rect x="1" y="9" width="1" height="1"/><rect x="2" y="11" width="1" height="1"/><rect x="4" y="11" width="1" height="1"/><rect x="6" y="11" width="1" height="1"/><rect x="8" y="11" width="1" height="1"/><rect x="9" y="9" width="1" height="1"/><rect x="9" y="7" width="1" height="1"/><rect x="9" y="5" width="1" height="1"/></g>
<rect x="8" y="1" width="1" height="2" fill="#000"/><rect x="8" y="3" width="2" height="1" fill="#000"/>
<circle cx="5.5" cy="6.8" r="3.7" fill="#0000c0" shape-rendering="geometricPrecision"/>
<path d="M3 5.5 Q4 4 6 4.5 L5 7 L3.5 8 Z" fill="#00a0a0" shape-rendering="geometricPrecision"/>
<path d="M5 6 L7.5 5.5 L8 8 L6 9 Z" fill="#008000" shape-rendering="geometricPrecision"/>
<rect x="4" y="6" width="1" height="2" fill="#fff"/>
</svg>
<svg style="left:544px;top:140px" width="13" height="15" viewBox="0 0 13 15">
<rect x="1" y="1" width="11" height="13" fill="#808080"/>
<path d="M0 0 H8 L11 3 V13 H0 Z" fill="#000"/><path d="M1 1 H7.5 L10 3.5 V12 H1 Z" fill="#fff"/>
<g fill="#ffff00"><rect x="2" y="1" width="1" height="1"/><rect x="4" y="1" width="1" height="1"/><rect x="6" y="1" width="1" height="1"/><rect x="1" y="3" width="1" height="1"/><rect x="1" y="5" width="1" height="1"/><rect x="1" y="7" width="1" height="1"/><rect x="1" y="9" width="1" height="1"/><rect x="2" y="11" width="1" height="1"/><rect x="4" y="11" width="1" height="1"/><rect x="6" y="11" width="1" height="1"/><rect x="8" y="11" width="1" height="1"/><rect x="9" y="9" width="1" height="1"/><rect x="9" y="7" width="1" height="1"/><rect x="9" y="5" width="1" height="1"/></g>
<rect x="8" y="1" width="1" height="2" fill="#000"/><rect x="8" y="3" width="2" height="1" fill="#000"/>
<circle cx="5.5" cy="6.8" r="3.7" fill="#0000c0" shape-rendering="geometricPrecision"/>
<path d="M3 5.5 Q4 4 6 4.5 L5 7 L3.5 8 Z" fill="#00a0a0" shape-rendering="geometricPrecision"/>
<path d="M5 6 L7.5 5.5 L8 8 L6 9 Z" fill="#008000" shape-rendering="geometricPrecision"/>
<rect x="4" y="6" width="1" height="2" fill="#fff"/>
</svg>
<svg style="left:544px;top:156px" width="13" height="15" viewBox="0 0 13 15">
<rect x="1" y="1" width="11" height="13" fill="#808080"/>
<path d="M0 0 H8 L11 3 V13 H0 Z" fill="#000"/><path d="M1 1 H7.5 L10 3.5 V12 H1 Z" fill="#fff"/>
<g fill="#ffff00"><rect x="2" y="1" width="1" height="1"/><rect x="4" y="1" width="1" height="1"/><rect x="6" y="1" width="1" height="1"/><rect x="1" y="3" width="1" height="1"/><rect x="1" y="5" width="1" height="1"/><rect x="1" y="7" width="1" height="1"/><rect x="1" y="9" width="1" height="1"/><rect x="2" y="11" width="1" height="1"/><rect x="4" y="11" width="1" height="1"/><rect x="6" y="11" width="1" height="1"/><rect x="8" y="11" width="1" height="1"/><rect x="9" y="9" width="1" height="1"/><rect x="9" y="7" width="1" height="1"/><rect x="9" y="5" width="1" height="1"/></g>
<rect x="8" y="1" width="1" height="2" fill="#000"/><rect x="8" y="3" width="2" height="1" fill="#000"/>
<circle cx="5.5" cy="6.8" r="3.7" fill="#0000c0" shape-rendering="geometricPrecision"/>
<path d="M3 5.5 Q4 4 6 4.5 L5 7 L3.5 8 Z" fill="#00a0a0" shape-rendering="geometricPrecision"/>
<path d="M5 6 L7.5 5.5 L8 8 L6 9 Z" fill="#008000" shape-rendering="geometricPrecision"/>
<rect x="4" y="6" width="1" height="2" fill="#fff"/>
</svg>
<div style="left:544px;top:109px;color:#fff;white-space:nowrap">Microsoft Internet Explorer</div>
<div class="tree" style="left:562px;top:125px">debug_frameset.htm</div>
<div class="tree" style="left:562px;top:141px">debug_topFrame.htm</div>
<div class="tree" style="left:562px;top:157px">debug_bottomFrame.htm</div>


</body></html>
